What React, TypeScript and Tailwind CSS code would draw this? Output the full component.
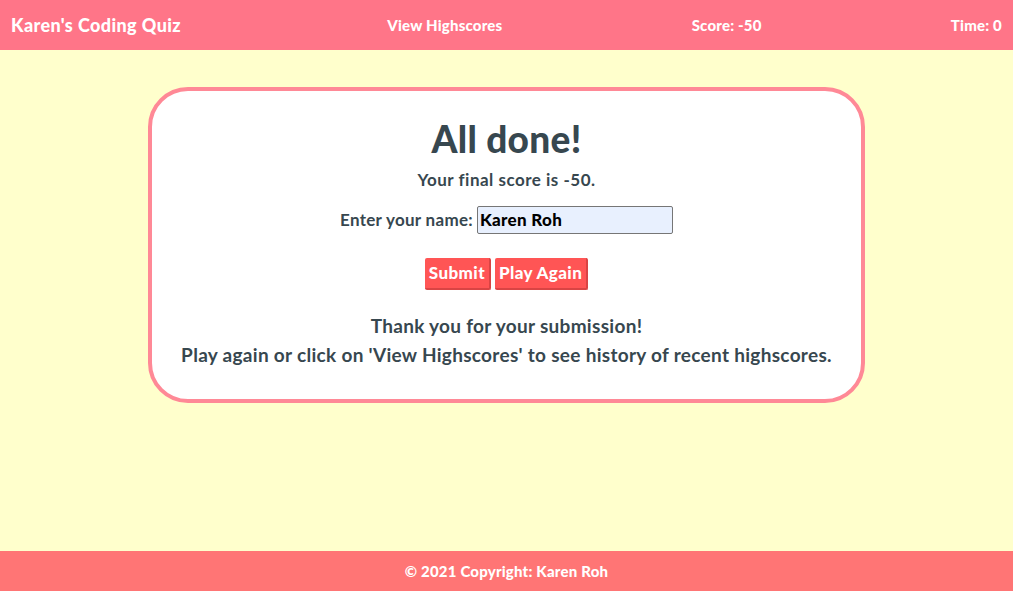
import { useState } from "react";

export default function App() {
	const [name, setName] = useState("Karen Roh");

	return (
		<div
			className="flex flex-col h-[591px] bg-[#ffffcc] text-[#37474f]"
			style={{ fontFamily: "Lato, 'Noto Sans', sans-serif" }}
		>
			<header className="flex items-center justify-between h-[50px] px-[11px] bg-[#ff7588] text-white font-black">
				<div className="text-[18px] tracking-[0.4px]">Karen's Coding Quiz</div>
				<div className="text-[15px] tracking-[0.2px] ml-[17px]">View Highscores</div>
				<div className="text-[15px] tracking-[0.2px]">Score: -50</div>
				<div className="text-[15px] tracking-[0.2px]">Time: 0</div>
			</header>

			<main className="flex-1 pt-[37px]">
				<div className="mx-auto w-[717px] h-[316px] bg-white border-[4px] border-[#ff8996] rounded-[40px] flex flex-col items-center pt-[25px]">
					<h1 className="text-[37px] font-black leading-[46px] tracking-[0.3px]">All done!</h1>
					<p className="mt-[5px] text-[17px] font-bold tracking-[0.5px]">Your final score is -50.</p>
					<div className="mt-[13px] flex items-center gap-[4px] text-[17px] font-bold tracking-[0.3px]">
						<label htmlFor="name">Enter your name:</label>
						<input
							id="name"
							value={name}
							onChange={(e) => setName(e.target.value)}
							className="w-[196px] h-[28px] px-[2px] bg-[#e8f0fe] border border-[#767676] rounded-[2px] text-black font-black text-[17px] tracking-[0.3px]"
						/>
					</div>
					<div className="mt-[24px] flex gap-[4px]">
						<button className="h-[32px] px-[4px] bg-[#ff5555] text-white font-black text-[17px] tracking-[0.4px] rounded-[2px] border-b-2 border-r-2 border-[#d94444]">
							Submit
						</button>
						<button className="h-[32px] px-[4px] bg-[#ff5555] text-white font-black text-[17px] tracking-[0.4px] rounded-[2px] border-b-2 border-r-2 border-[#d94444]">
							Play Again
						</button>
					</div>
					<p className="mt-[23px] text-[19px] font-bold leading-[26px] tracking-[0.3px]">Thank you for your submission!</p>
					<p className="mt-[3px] text-[19px] font-bold leading-[26px] tracking-[0.3px]">
						Play again or click on 'View Highscores' to see history of recent highscores.
					</p>
				</div>
			</main>

			<footer className="h-[40px] flex items-center justify-center bg-[#ff7575] text-white text-[15px] font-black tracking-[0.2px]">
				© 2021 Copyright: Karen Roh
			</footer>
		</div>
	);
}
